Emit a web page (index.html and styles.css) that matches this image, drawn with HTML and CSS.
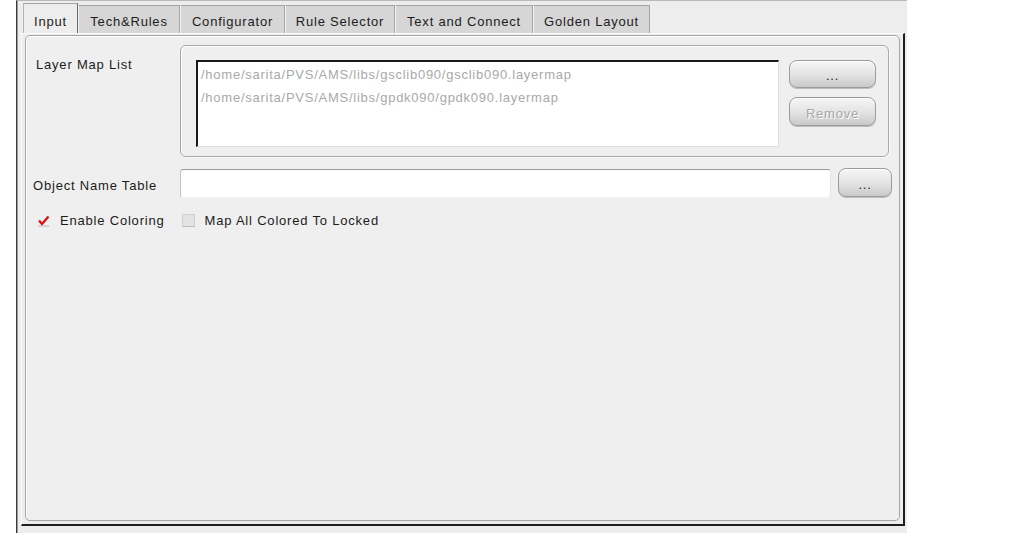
FILE: index.html
```html
<!DOCTYPE html>
<html>
<head>
<meta charset="utf-8">
<link rel="stylesheet" href="styles.css">
</head>
<body>
<div class="window">
  <div class="tabs">
    <div class="tab active w-input">Input</div>
    <div class="tab w-tech">Tech&amp;Rules</div>
    <div class="tab w-conf">Configurator</div>
    <div class="tab w-rule">Rule Selector</div>
    <div class="tab w-text">Text and Connect</div>
    <div class="tab w-gold">Golden Layout</div>
  </div>
  <div class="pane">
    <div class="frame">
      <div class="row-map">
        <div class="label label-map">Layer Map List</div>
        <div class="groupbox">
          <div class="listbox">
            <div class="item">/home/sarita/PVS/AMS/libs/gsclib090/gsclib090.layermap</div>
            <div class="item">/home/sarita/PVS/AMS/libs/gpdk090/gpdk090.layermap</div>
          </div>
          <div class="btncol">
            <div class="btn btn-big">...</div>
            <div class="btn btn-big disabled">Remove</div>
          </div>
        </div>
      </div>
      <div class="row-obj">
        <div class="label label-obj">Object Name Table</div>
        <div class="textfield"></div>
        <div class="btn btn-small">...</div>
      </div>
      <div class="row-check">
        <div class="check checked">
          <svg width="13" height="13" viewBox="0 0 13 13"><path d="M1 12 H12" stroke="#b8b8b8" stroke-width="1"/><path d="M2 6.5 L5 10 L11.5 2.5" fill="none" stroke="#d01818" stroke-width="2.4"/></svg>
        </div>
        <span class="clabel">Enable Coloring</span>
        <div class="check unchecked"></div>
        <span class="clabel">Map All Colored To Locked</span>
      </div>
    </div>
  </div>
</div>
</body>
</html>
```

FILE: styles.css
```css
html, body {
  margin: 0;
  padding: 0;
  background: #ffffff;
}
body {
  font-family: "Liberation Sans", Arial, sans-serif;
  font-size: 13px;
  letter-spacing: 0.8px;
  color: #1c1c1c;
}
.window {
  box-sizing: border-box;
  margin-left: 16px;
  width: 891px;
  height: 533px;
  background: #ededed;
  border-left: 1px solid #3a3a3a;
  border-top: 1px solid #b8b8b8;
  box-shadow: inset 1px 0 0 #9c9c9c;
  padding: 2px 2px 7px 4px;
}
.tabs {
  display: flex;
  height: 30px;
  margin-left: 2px;
  align-items: flex-end;
}
.tab {
  box-sizing: border-box;
  height: 28px;
  background: #d6d6d6;
  border: 1px solid #a4a4a4;
  border-bottom: none;
  border-left-color: #f4f4f4;
  text-align: center;
  line-height: 31px;
  white-space: nowrap;
}
.tab.active {
  height: 30px;
  background: #ededed;
  border-left: 1px solid #b4b4b4;
  border-right: 1px solid #6a6a6a;
  line-height: 35px;
}
.w-input { width: 55px; }
.w-tech { width: 102px; }
.w-conf { width: 105px; }
.w-rule { width: 110px; }
.w-text { width: 138px; }
.w-gold { width: 117px; }

.pane {
  box-sizing: border-box;
  height: 493px;
  border-top: 1px solid #fafafa;
  border-left: 1px solid #fafafa;
  border-right: 2px solid #1e1e1e;
  border-bottom: 2px solid #1e1e1e;
  padding: 1px 3px 3px 3px;
}
.frame {
  box-sizing: border-box;
  height: 100%;
  border: 1px solid #a6a6a6;
  border-radius: 5px;
  box-shadow: inset 1px 1px 0 #ffffff;
  background: #efefef;
  padding: 9px 0 0 0;
}
.row-map {
  display: flex;
  height: 112px;
}
.label {
  white-space: nowrap;
}
.label-map {
  width: 144px;
  padding-left: 10px;
  padding-top: 12px;
}
.groupbox {
  box-sizing: border-box;
  width: 709px;
  height: 112px;
  border: 1px solid #a8a8a8;
  border-radius: 6px;
  box-shadow: inset 1px 1px 0 #ffffff, 1px 1px 0 #fbfbfb;
  display: flex;
  padding: 14px 12px 9px 15px;
  gap: 10px;
}
.listbox {
  box-sizing: border-box;
  width: 583px;
  height: 87px;
  background: #ffffff;
  border-top: 2px solid #1a1a1a;
  border-left: 2px solid #1a1a1a;
  border-right: 1px solid #dedede;
  border-bottom: 1px solid #dedede;
  padding: 3px 0 0 3px;
  color: #a9a9a9;
  letter-spacing: 0.75px;
}
.item {
  height: 23px;
  line-height: 20px;
  white-space: nowrap;
}
.btncol {
  display: flex;
  flex-direction: column;
  gap: 9px;
}
.btn {
  box-sizing: border-box;
  border: 1px solid #9c9c9c;
  border-radius: 8px;
  background: linear-gradient(#f6f6f6, #e2e2e2 55%, #c9c9c9);
  box-shadow: inset 0 1px 0 #ffffff, 0 1px 0 #bdbdbd;
  text-align: center;
  color: #222;
}
.btn-big {
  width: 87px;
  height: 28px;
  line-height: 29px;
}
.btn-big.disabled {
  height: 29px;
  line-height: 32px;
  color: #a8a8a8;
  text-shadow: 1px 1px 0 #ffffff;
}
.row-obj {
  display: flex;
  align-items: center;
  margin-top: 11px;
  height: 31px;
}
.label-obj {
  width: 147px;
  padding-left: 7px;
  padding-top: 4px;
}
.textfield {
  box-sizing: border-box;
  width: 651px;
  height: 29px;
  background: #ffffff;
  border-top: 1px solid #9a9a9a;
  border-left: 1px solid #c4c4c4;
  border-right: 1px solid #e4e4e4;
  border-bottom: 1px solid #f4f4f4;
  border-radius: 3px;
}
.btn-small {
  width: 54px;
  height: 29px;
  line-height: 31px;
  margin-left: 7px;
  margin-top: -2px;
}
.row-check {
  display: flex;
  align-items: center;
  margin-top: 12px;
  height: 18px;
}
.check {
  box-sizing: border-box;
  width: 13px;
  height: 13px;
}
.check.checked {
  margin-left: 11px;
}
.check.checked svg {
  display: block;
}
.check.unchecked {
  margin-left: 17px;
  background: #e3e3e3;
  border: 1px solid #d0d0d0;
  border-bottom-color: #bcbcbc;
}
.clabel {
  margin-left: 10px;
  white-space: nowrap;
}
```
